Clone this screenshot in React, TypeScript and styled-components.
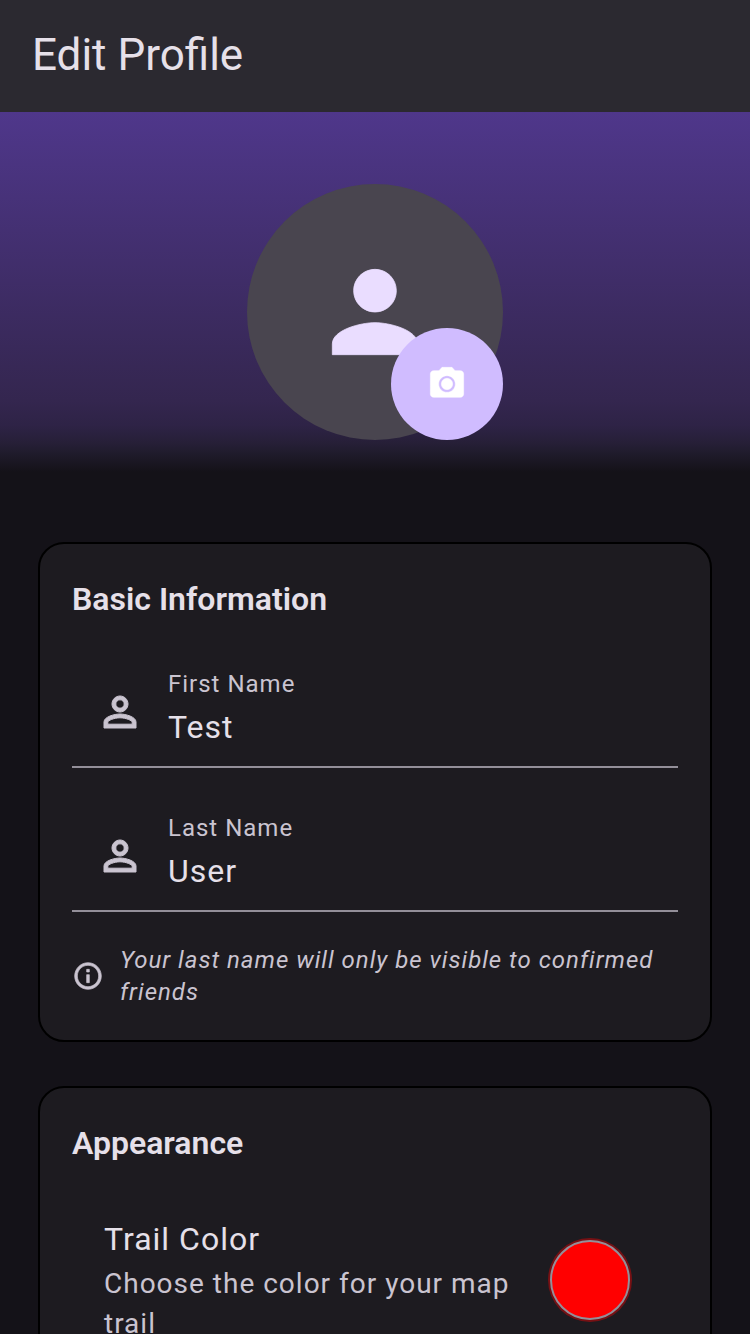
import React, { useState } from "react";
import styled, { createGlobalStyle } from "styled-components";

const colors = {
  surface: "#141218",
  surfaceLow: "#1d1b20",
  surfaceHigh: "#2b2930",
  avatar: "#49454f",
  primary: "#d0bcff",
  primaryContainer: "#4f378b",
  onPrimaryContainer: "#eaddff",
  text: "#e6e0e9",
  textMuted: "#cac4d0",
  outline: "#938f99",
};

const GlobalStyle = createGlobalStyle`
  *, *::before, *::after { box-sizing: border-box; }
  body {
    margin: 0;
    background: ${colors.surface};
    color: ${colors.text};
    font-family: Roboto, "Liberation Sans", sans-serif;
  }
`;

const Screen = styled.div`
  display: flex;
  flex-direction: column;
  height: 100vh;
`;

const AppBar = styled.header`
  display: flex;
  flex: none;
  align-items: center;
  min-height: 112px;
  padding: 0 32px 2px;
  background: ${colors.surfaceHigh};
`;

const PageTitle = styled.h1`
  margin: 0;
  font-size: 44px;
  font-weight: 400;
  line-height: 56px;
`;

const Content = styled.main`
  flex: 1;
  min-height: 0;
  overflow-y: auto;
  scrollbar-width: none;
`;

const Hero = styled.section`
  display: flex;
  justify-content: center;
  padding: 72px 32px 32px;
  background: linear-gradient(
    to bottom,
    ${colors.primaryContainer} 0%,
    #34264f 80%,
    #2e2346 87%,
    #261f37 92%,
    #1f1b2b 95%,
    ${colors.surface} 100%
  );
`;

const Avatar = styled.div`
  position: relative;
  display: flex;
  align-items: center;
  justify-content: center;
  width: 256px;
  height: 256px;
  border-radius: 50%;
  background: ${colors.avatar};
  color: ${colors.onPrimaryContainer};
`;

const PhotoButton = styled.button`
  position: absolute;
  right: 0;
  bottom: 0;
  display: flex;
  align-items: center;
  justify-content: center;
  width: 112px;
  height: 112px;
  padding: 0;
  border: 0;
  border-radius: 50%;
  background: ${colors.primary};
  color: #fff;
  cursor: pointer;
`;

const Icon = styled.svg<{ $size: number }>`
  flex: none;
  width: ${(p) => p.$size}px;
  height: ${(p) => p.$size}px;
  fill: currentColor;
`;

const Cards = styled.div`
  display: flex;
  flex-direction: column;
  gap: 44px;
  padding: 70px 38px 40px;
`;

const Card = styled.section`
  display: flex;
  flex-direction: column;
  gap: 32px;
  padding: 32px;
  border: 2px solid #000;
  border-radius: 26px;
  background: ${colors.surfaceLow};
`;

const CardTitle = styled.h2`
  margin: 0;
  padding-bottom: 2px;
  font-size: 32px;
  font-weight: 600;
  line-height: 46px;
`;

const Field = styled.div`
  display: flex;
  align-items: center;
  gap: 24px;
  height: 112px;
  padding-left: 24px;
  box-shadow: inset 0 -2px ${colors.outline};
  color: ${colors.textMuted};
`;

const FieldBody = styled.div`
  display: flex;
  flex: 1;
  flex-direction: column;
  gap: 4px;
  min-width: 0;
  padding-bottom: 6px;
`;

const Label = styled.label`
  font-size: 24px;
  line-height: 32px;
  letter-spacing: 1px;
`;

const TextInput = styled.input`
  width: 100%;
  height: 46px;
  padding: 0;
  border: 0;
  outline: 0;
  background: transparent;
  color: ${colors.text};
  font: 400 32px/46px Roboto, "Liberation Sans", sans-serif;
  letter-spacing: 1px;
`;

const Note = styled.div`
  display: flex;
  align-items: center;
  gap: 16px;
  color: ${colors.textMuted};
`;

const NoteText = styled.p`
  margin: 0;
  font-size: 24px;
  font-style: italic;
  line-height: 32px;
  letter-spacing: 1px;
`;

const Tile = styled.div`
  display: flex;
  align-items: center;
  gap: 32px;
  padding: 16px 48px 16px 32px;
`;

const TileText = styled.div`
  flex: 1;
  min-width: 0;
`;

const TileTitle = styled.h3`
  margin: 0;
  padding-bottom: 2px;
  font-size: 32px;
  font-weight: 400;
  line-height: 46px;
  letter-spacing: 1px;
`;

const TileSubtitle = styled.p`
  margin: 0;
  color: ${colors.textMuted};
  font-size: 28px;
  line-height: 40px;
  letter-spacing: 1px;
`;

const Swatch = styled.button<{ $color: string }>`
  flex: none;
  width: 80px;
  height: 80px;
  padding: 0;
  border: 2px solid ${colors.outline};
  border-radius: 50%;
  background: ${(p) => p.$color};
  box-shadow: 0 0 0 2px rgba(255, 0, 0, 0.4);
  cursor: pointer;
`;

const PersonOutline = () => (
  <Icon $size={48} viewBox="0 0 24 24" stroke="currentColor" strokeWidth="0.5" aria-hidden="true">
    <path d="M12 5.9c1.16 0 2.1.94 2.1 2.1s-.94 2.1-2.1 2.1S9.9 9.16 9.9 8s.94-2.1 2.1-2.1m0 9c2.97 0 6.1 1.46 6.1 2.1v1.1H5.9V17c0-.64 3.13-2.1 6.1-2.1M12 4C9.79 4 8 5.79 8 8s1.79 4 4 4 4-1.79 4-4-1.79-4-4-4zm0 9c-2.67 0-8 1.34-8 4v3h16v-3c0-2.66-5.33-4-8-4z" />
  </Icon>
);

type NameFieldProps = {
  id: string;
  label: string;
  value: string;
  onChange: (value: string) => void;
};

const NameField = ({ id, label, value, onChange }: NameFieldProps) => (
  <Field>
    <PersonOutline />
    <FieldBody>
      <Label htmlFor={id}>{label}</Label>
      <TextInput id={id} type="text" value={value} onChange={(e) => onChange(e.target.value)} />
    </FieldBody>
  </Field>
);

export default function App() {
  const [firstName, setFirstName] = useState("Test");
  const [lastName, setLastName] = useState("User");

  return (
    <>
      <GlobalStyle />
      <Screen>
        <AppBar>
          <PageTitle>Edit Profile</PageTitle>
        </AppBar>
        <Content>
          <Hero>
            <Avatar>
              <Icon $size={128} viewBox="0 0 24 24" stroke="currentColor" strokeWidth="0.15" aria-hidden="true">
                <path d="M12 12c2.21 0 4-1.79 4-4s-1.79-4-4-4-4 1.79-4 4 1.79 4 4 4zm0 2c-2.67 0-8 1.34-8 4v2h16v-2c0-2.66-5.33-4-8-4z" />
              </Icon>
              <PhotoButton type="button" aria-label="Change photo">
                <Icon $size={40} viewBox="0 0 24 24" stroke="currentColor" strokeWidth="0.3" aria-hidden="true">
                  <circle cx="12" cy="12" r="3.4" />
                  <path d="M9 2L7.17 4H4c-1.1 0-2 .9-2 2v12c0 1.1.9 2 2 2h16c1.1 0 2-.9 2-2V6c0-1.1-.9-2-2-2h-3.17L15 2H9zm3 15c-2.76 0-5-2.24-5-5s2.24-5 5-5 5 2.24 5 5-2.24 5-5 5z" />
                </Icon>
              </PhotoButton>
            </Avatar>
          </Hero>
          <Cards>
            <Card>
              <CardTitle>Basic Information</CardTitle>
              <NameField id="first-name" label="First Name" value={firstName} onChange={setFirstName} />
              <NameField id="last-name" label="Last Name" value={lastName} onChange={setLastName} />
              <Note>
                <Icon $size={32} viewBox="0 0 24 24" stroke="currentColor" strokeWidth="0.5" aria-hidden="true">
                  <path d="M11 7h2v2h-2zm0 4h2v6h-2zm1-9C6.48 2 2 6.48 2 12s4.48 10 10 10 10-4.48 10-10S17.52 2 12 2zm0 18c-4.41 0-8-3.59-8-8s3.59-8 8-8 8 3.59 8 8-3.59 8-8 8z" />
                </Icon>
                <NoteText>Your last name will only be visible to confirmed friends</NoteText>
              </Note>
            </Card>
            <Card>
              <CardTitle>Appearance</CardTitle>
              <Tile>
                <TileText>
                  <TileTitle>Trail Color</TileTitle>
                  <TileSubtitle>Choose the color for your map trail</TileSubtitle>
                </TileText>
                <Swatch type="button" $color="#ff0000" aria-label="Trail color: red" />
              </Tile>
            </Card>
          </Cards>
        </Content>
      </Screen>
    </>
  );
}
